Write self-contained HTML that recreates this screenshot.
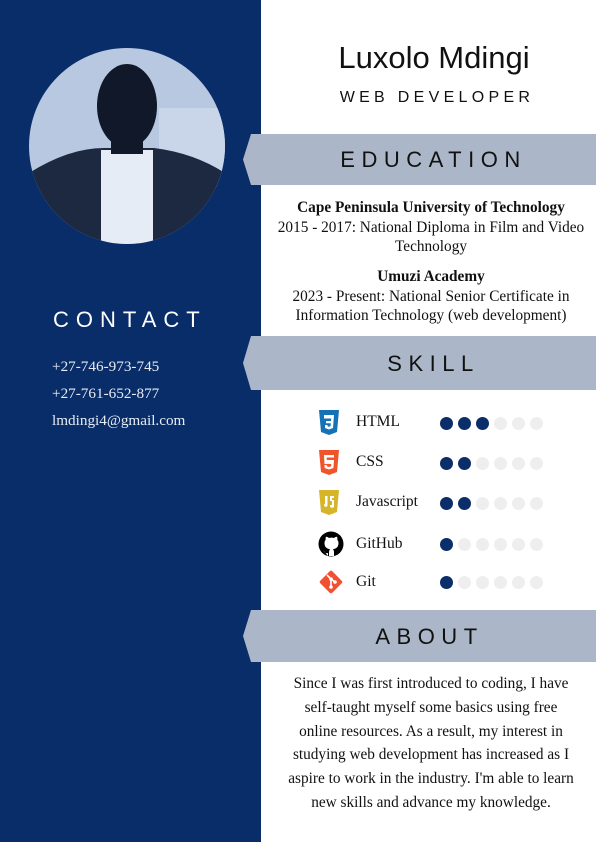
<!DOCTYPE html>
<html><head><meta charset="utf-8"><style>
*{margin:0;padding:0;box-sizing:border-box}
body{width:596px;height:842px;position:relative;background:#fff;overflow:hidden;font-family:"Liberation Serif",serif;color:#111}
.left{position:absolute;left:0;top:0;width:261px;height:842px;background:#082d69}
.abs{position:absolute}
.ban{position:absolute;left:243px;width:353px}
.ban svg{position:absolute;left:0;top:0}
.ban span{position:absolute;left:0;right:0;text-align:center;font-family:"Liberation Sans",sans-serif;font-size:22px;letter-spacing:6.5px;color:#111;padding-left:28px}
.c{text-align:center;position:absolute;left:266px;width:330px;font-size:15.3px;line-height:19.5px}
.sk{position:absolute;left:318px;width:240px;height:26px}
.sk .n{position:absolute;left:38px;top:3px;font-size:15.5px}
.dots{position:absolute;left:122px;top:7px}
.dots i{display:inline-block;width:13px;height:13px;border-radius:50%;background:#eeeeee;margin-right:5px}
.dots i.f{background:#0b2e6b}
.ct{position:absolute;left:52px;color:#e8ecf4;font-size:15.2px}
</style></head><body>
<div class="left"></div>
<svg class="abs" style="left:29px;top:48px" width="196" height="196" viewBox="0 0 196 196">
<defs><clipPath id="cp"><circle cx="98" cy="98" r="98"/></clipPath></defs>
<g clip-path="url(#cp)">
<rect width="196" height="196" fill="#b7c8e0"/>
<rect x="130" y="60" width="70" height="80" fill="#c9d6ea"/>
<path d="M0 125 Q40 100 75 100 L125 100 Q165 105 196 125 L196 196 L0 196Z" fill="#1c2940"/>
<path d="M72 102 L124 102 L124 196 L72 196Z" fill="#e6ecf6"/>
<ellipse cx="98" cy="58" rx="30" ry="42" fill="#10182a"/>
<rect x="82" y="82" width="32" height="24" fill="#10182a"/>
</g></svg>
<div class="abs" style="left:269px;width:330px;top:40px;text-align:center;font-family:'Liberation Sans',sans-serif;font-size:31px;color:#111">Luxolo Mdingi</div>
<div class="abs" style="left:272px;width:330px;top:89px;text-align:center;font-family:'Liberation Sans',sans-serif;font-size:16px;letter-spacing:4.3px;color:#111">WEB DEVELOPER</div>

<div class="ban" style="top:134px;height:51px"><svg width="353" height="51"><polygon points="8,0 353,0 353,51 8,51 0,25.5" fill="#abb7c8"/></svg><span style="top:13px">EDUCATION</span></div>
<div class="c" style="top:198px"><b>Cape Peninsula University of Technology</b><br>2015 - 2017: National Diploma in Film and Video Technology</div>
<div class="c" style="top:267px"><b>Umuzi Academy</b><br>2023 - Present: National Senior Certificate in Information Technology (web development)</div>

<div class="ban" style="top:336px;height:54px"><svg width="353" height="54"><polygon points="8,0 353,0 353,54 8,54 0,27" fill="#abb7c8"/></svg><span style="top:15px">SKILL</span></div>

<div class="sk" style="top:410px"><svg width="22" height="26" viewBox="0 0 22 26"><path d="M1 0h20l-2 22-8 3-8-3z" fill="#1572b6"/><path d="M6 5h10l-1 13-4 1.5-4-1.5v-3h2.5v1.3l1.5.5 1.5-.5.3-3H8v-2.3h5l.2-2.5H6z" fill="#fff"/></svg><span class="n">HTML</span><div class="dots"><i class="f"></i><i class="f"></i><i class="f"></i><i></i><i></i><i></i></div></div>
<div class="sk" style="top:450px"><svg width="22" height="26" viewBox="0 0 22 26"><path d="M1 0h20l-2 22-8 3-8-3z" fill="#f0542a"/><path d="M6 5h10v2.5H8.6l.2 2.5H16l-.6 8-4.4 1.5-4.4-1.5-.2-3h2.4l.1 1.4 2.1.6 2.1-.6.2-2.4H6.5z" fill="#fff"/></svg><span class="n">CSS</span><div class="dots"><i class="f"></i><i class="f"></i><i></i><i></i><i></i><i></i></div></div>
<div class="sk" style="top:490px"><svg width="22" height="26" viewBox="0 0 22 26"><path d="M1 0h20l-2 22-8 3-8-3z" fill="#d6b52b"/><path d="M7 6h2.5v10l-1.5 1-2-1v-2l1 .5V6zM12 6h4v2h-2v2h2v7l-2 1-2-1v-2h2v-4h-2z" fill="#fff"/></svg><span class="n">Javascript</span><div class="dots"><i class="f"></i><i class="f"></i><i></i><i></i><i></i><i></i></div></div>
<div class="sk" style="top:531px"><svg width="26" height="26" viewBox="0 0 26 26"><circle cx="13" cy="13" r="12.5" fill="#000"/><path d="M10 25v-3c-2.5.5-3.5-.5-4.5-2.5M16 25v-4c0-1.2-.4-2.2-1.2-2.8 3.4-.4 5.7-2 5.7-6.2 0-1.2-.4-2.3-1.2-3.2.2-1 .1-2.2-.3-3-1.2 0-2.2.7-3 1.2a10 10 0 0 0-5 0C10.2 6.5 9.2 5.8 8 5.8c-.4.8-.5 2-.3 3C6.9 9.7 6.5 10.8 6.5 12c0 4.2 2.3 5.8 5.7 6.2-.8.6-1.2 1.6-1.2 2.8v4z" fill="#fff"/></svg><span class="n" style="top:4px">GitHub</span><div class="dots"><i class="f"></i><i></i><i></i><i></i><i></i><i></i></div></div>
<div class="sk" style="top:569px"><svg width="26" height="26" viewBox="0 0 26 26"><rect x="4.5" y="4.5" width="17" height="17" rx="2" transform="rotate(45 13 13)" fill="#f05133"/><path d="M9 6l4 4v8M13 10l4 3" stroke="#fff" stroke-width="1.6" fill="none"/><circle cx="13" cy="10" r="1.8" fill="#fff"/><circle cx="13" cy="18" r="1.8" fill="#fff"/><circle cx="17" cy="13" r="1.8" fill="#fff"/></svg><span class="n" style="top:4px">Git</span><div class="dots"><i class="f"></i><i></i><i></i><i></i><i></i><i></i></div></div>

<div class="ban" style="top:610px;height:52px"><svg width="353" height="52"><polygon points="8,0 353,0 353,52 8,52 0,26" fill="#abb7c8"/></svg><span style="top:14px;padding-left:20px">ABOUT</span></div>
<div class="c" style="top:672px;left:264px;width:334px;line-height:23.8px;white-space:nowrap">Since I was first introduced to coding, I have<br>self-taught myself some basics using free<br>online resources. As a result, my interest in<br>studying web development has increased as I<br>aspire to work in the industry. I'm able to learn<br>new skills and advance my knowledge.</div>

<div class="abs" style="left:53px;top:307px;color:#fff;font-family:'Liberation Sans',sans-serif;font-size:22px;letter-spacing:7px">CONTACT</div>
<div class="ct" style="top:358px">+27-746-973-745</div>
<div class="ct" style="top:385px">+27-761-652-877</div>
<div class="ct" style="top:412px">lmdingi4@gmail.com</div>
</body></html>
